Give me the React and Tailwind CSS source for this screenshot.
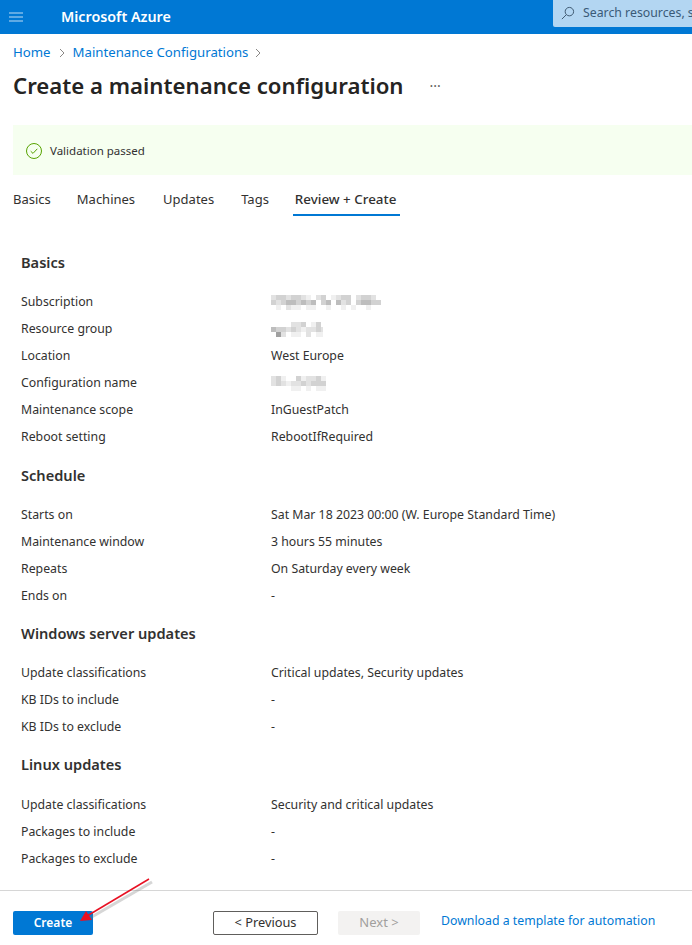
import React from "react";

const font = { fontFamily: '"Noto Sans", sans-serif' };

function Mosaic({ cells, w }) {
  const shades = ["#ffffff", "#f0f0f0", "#e2e2e2", "#d2d2d2", "#bdbdbd", "#a0a0a0"];
  const size = 5;
  return (
    <svg width={w} height={15} viewBox={`0 0 ${w} 15`} className="block" shapeRendering="crispEdges">
      {cells.map((row, y) =>
        row.split("").map((c, x) => (
          <rect key={`${x}-${y}`} x={x * size} y={y * size} width={size} height={size} fill={shades[Number(c)]} />
        ))
      )}
    </svg>
  );
}

const M1 = ["2332332102301233023320", "3234434340340423034433", "0102110110010010100100"];
const M2 = ["00002230130", "43323212232", "05201102011"];
const M3 = ["23100312231", "23212232333", "00001101011"];

function Row({ label, value, mosaic, w }) {
  return (
    <div className="flex h-[27px] items-center text-[12.3px] text-[#323130]">
      <div className="w-[250px] shrink-0">{label}</div>
      {mosaic ? <Mosaic cells={mosaic} w={w} /> : <div className="whitespace-nowrap">{value}</div>}
    </div>
  );
}

function Heading({ children, className }) {
  return <h2 className={`text-[14.6px] leading-[21px] font-semibold text-[#323130] ${className}`}>{children}</h2>;
}

export default function App() {
  return (
    <div style={font} className="relative flex h-[945px] w-[692px] flex-col overflow-hidden bg-white">
      <header className="flex h-[34px] shrink-0 items-center bg-[#0078d4]">
        <svg width="16" height="12" viewBox="0 0 16 12" className="ml-[8px]" stroke="#7fbbe9" strokeWidth="1.5">
          <path d="M1 2h14M1 6h14M1 10h14" />
        </svg>
        <span className="ml-[37px] text-[14.3px] font-semibold text-white">Microsoft Azure</span>
        <div className="ml-auto flex h-[27px] w-[139px] items-center self-start rounded-bl-[2px] bg-[#b3d6f2] pl-[7px]">
          <svg width="15" height="15" viewBox="0 0 16 16" fill="none" stroke="#39536b" strokeWidth="1" className="shrink-0">
            <circle cx="10" cy="6" r="4.5" />
            <path d="M6.7 9.3 2 14" />
          </svg>
          <span className="ml-[8px] whitespace-nowrap text-[12.3px] text-[#3a5a78]">Search resources, s</span>
        </div>
      </header>

      <div className="flex flex-col px-[13px]">
        <nav className="mt-[9px] flex h-[19px] items-center text-[13.2px] text-[#0078d4]">
          <span>Home</span>
          <svg width="8" height="10" viewBox="0 0 8 10" fill="none" stroke="#8a8886" className="mx-[7px]"><path d="M2 1l4 4-4 4" /></svg>
          <span>Maintenance Configurations</span>
          <svg width="8" height="10" viewBox="0 0 8 10" fill="none" stroke="#8a8886" className="ml-[6px]"><path d="M2 1l4 4-4 4" /></svg>
        </nav>
        <div className="mt-[7px] flex h-[34px] items-center">
          <h1 className="whitespace-nowrap text-[22.2px] font-semibold text-[#252423]">Create a maintenance configuration</h1>
          <span className="ml-[26px] text-[14px] leading-none text-[#605e5c]">···</span>
        </div>

        <div className="mt-[22px] mr-[-13px] flex h-[50px] items-center bg-[#f6fff0] pl-[13px]">
          <svg width="16" height="16" viewBox="0 0 16 16" fill="none" className="mt-[1px]">
            <circle cx="8" cy="8" r="7.5" stroke="#57a300" />
            <path d="M4.7 8.2 7 10.4l4.3-4.6" stroke="#57a300" />
          </svg>
          <span className="ml-[8px] mt-[2px] text-[11.5px] text-[#323130]">Validation passed</span>
        </div>

        <div className="mt-[10px] flex h-[31px] text-[13px] text-[#323130]">
          <span className="mr-[26px] pt-[5px]">Basics</span>
          <span className="mr-[28px] pt-[5px]">Machines</span>
          <span className="mr-[27px] pt-[5px]">Updates</span>
          <span className="mr-[24px] pt-[5px]">Tags</span>
          <span className="h-[31px] border-b-2 border-[#0078d4] pl-[2px] pr-[4px] pt-[4px] text-[13.4px] font-medium">Review + Create</span>
        </div>
      </div>

      <main className="flex flex-col px-[21px] pt-[36px]">
        <Heading>Basics</Heading>
        <div className="mt-[16px]">
          <Row label="Subscription" mosaic={M1} w={112} />
          <Row label="Resource group" mosaic={M2} w={52} />
          <Row label="Location" value="West Europe" />
          <Row label="Configuration name" mosaic={M3} w={55} />
          <Row label="Maintenance scope" value="InGuestPatch" />
          <Row label="Reboot setting" value="RebootIfRequired" />
        </div>
        <Heading className="mt-[14px]">Schedule</Heading>
        <div className="mt-[16px]">
          <Row label="Starts on" value="Sat Mar 18 2023 00:00 (W. Europe Standard Time)" />
          <Row label="Maintenance window" value="3 hours 55 minutes" />
          <Row label="Repeats" value="On Saturday every week" />
          <Row label="Ends on" value="-" />
        </div>
        <Heading className="mt-[13px]">Windows server updates</Heading>
        <div className="mt-[16px]">
          <Row label="Update classifications" value="Critical updates, Security updates" />
          <Row label="KB IDs to include" value="-" />
          <Row label="KB IDs to exclude" value="-" />
        </div>
        <Heading className="mt-[13px]">Linux updates</Heading>
        <div className="mt-[17px]">
          <Row label="Update classifications" value="Security and critical updates" />
          <Row label="Packages to include" value="-" />
          <Row label="Packages to exclude" value="-" />
        </div>
      </main>

      <footer className="mt-[17px] flex h-[55px] items-start border-t border-[#d6d6d6] px-[13px] pt-[20px]">
        <button className="h-[24px] w-[80px] rounded-[2px] bg-[#0078d4] text-[12px] font-semibold text-white">Create</button>
        <button className="ml-[120px] h-[24px] w-[105px] rounded-[2px] border border-[#605e5c] bg-white text-[12.8px] text-[#323130]">&lt; Previous</button>
        <button className="ml-[20px] h-[24px] w-[82px] rounded-[2px] bg-[#f3f2f1] text-[13px] text-[#a19f9d]">Next &gt;</button>
        <span className="ml-[21px] mt-[1px] whitespace-nowrap text-[12.3px] text-[#0078d4]">Download a template for automation</span>
      </footer>

      <svg width="80" height="50" viewBox="0 0 80 50" className="absolute left-[78px] top-[876px]" fill="none">
        <path d="M74 6 12 42" stroke="#777" strokeOpacity="0.3" strokeWidth="3" />
        <path d="M71 3 9 40" stroke="#e81123" strokeWidth="1.5" />
        <path d="M2 45l12-1-6-9z" fill="#e81123" />
      </svg>
    </div>
  );
}
